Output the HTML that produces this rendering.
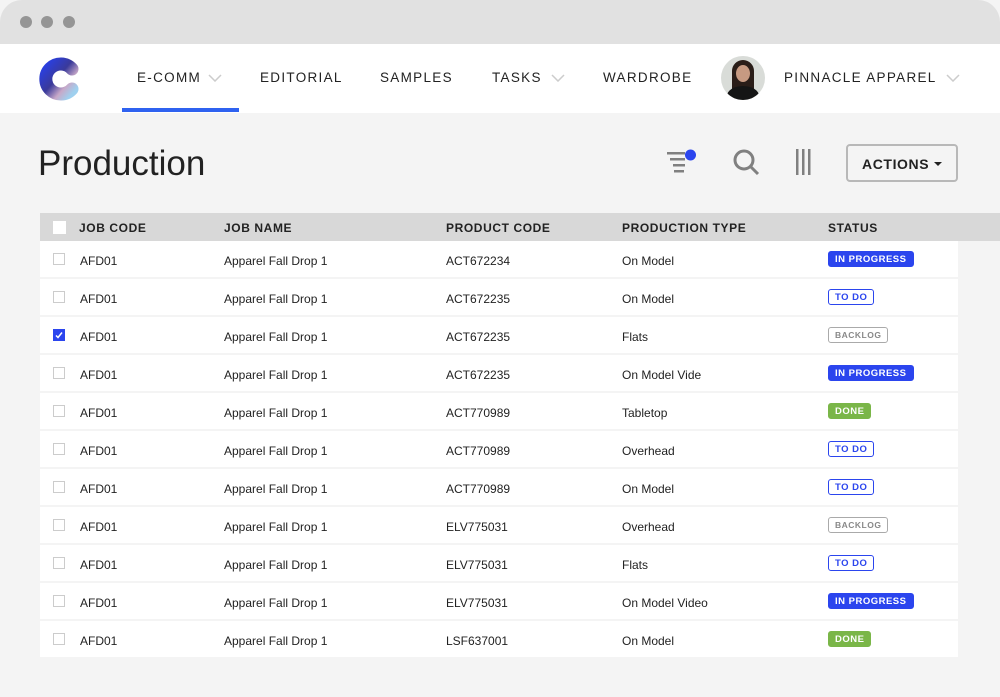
<!DOCTYPE html>
<html><head><style>
*{margin:0;padding:0;box-sizing:border-box}
body{width:1000px;height:697px;background:#f4f4f4;font-family:"Liberation Sans",sans-serif;position:relative;overflow:hidden;color:#222}
.top{position:absolute;left:0;top:0;width:1000px;height:44px;background:#e1e1e1;border-radius:22px 22px 0 0}
.dot{position:absolute;top:16px;width:12px;height:12px;border-radius:50%;background:#959595}
.nav{position:absolute;left:0;top:44px;width:1000px;height:69px;background:#fff}
.ni{position:absolute;top:26px;font-size:13.5px;letter-spacing:1.3px;color:#222}
.chev{position:absolute;top:30px}
h1{position:absolute;left:38px;top:144px;font-size:35px;font-weight:normal;color:#222}
.hdr{position:absolute;left:40px;top:213px;width:960px;height:28px;background:#d8d8d8}
.hdr span{position:absolute;top:8px;font-size:12px;font-weight:bold;letter-spacing:0.6px;color:#222}
.row{position:absolute;left:40px;width:918px;height:36px;background:#fff}
.row span{position:absolute;top:13px;font-size:12px;color:#222}
.cb{position:absolute;left:13px;top:12px;width:12px;height:12px;border:1px solid #ccc;background:#fff}
.b{position:absolute;left:788px;top:10px;height:16px;padding:0 6px;font-size:9.5px;font-weight:bold;letter-spacing:0.5px;display:flex;align-items:center;border-radius:3px;border:1px solid}
.ip{background:#2b45ee;border-color:#2b45ee;color:#fff}
.td{color:#2b45ee;border-color:#2b45ee;background:#fff}
.bl{color:#888;border-color:#aaa;background:#fff;font-size:8.5px}
.dn{background:#7ab648;border-color:#7ab648;color:#fff}
</style></head><body>
<div class="top"><div class="dot" style="left:20px"></div><div class="dot" style="left:41px"></div><div class="dot" style="left:63px"></div></div>
<div class="nav">
<svg style="position:absolute;left:39px;top:12px" width="44" height="46" viewBox="0 0 44 46"><defs><linearGradient id="g" x1="0" y1="0" x2="1" y2="1"><stop offset="0" stop-color="#2a3fe0"/><stop offset="0.45" stop-color="#3a3a9a"/><stop offset="0.75" stop-color="#c7a8c8"/><stop offset="1" stop-color="#9fd0ef"/></linearGradient></defs><path d="M33 13 A15 15 0 1 0 33 33" fill="none" stroke="url(#g)" stroke-width="13" stroke-linecap="round"/></svg>
<div class="ni" style="left:137px">E-COMM</div>
<svg class="chev" style="left:208px" width="14" height="8"><path d="M1 1l6 6 6-6" fill="none" stroke="#ccc" stroke-width="1.5"/></svg>
<div style="position:absolute;left:122px;top:64px;width:117px;height:4px;background:#2f62f0"></div>
<div class="ni" style="left:260px">EDITORIAL</div>
<div class="ni" style="left:380px">SAMPLES</div>
<div class="ni" style="left:492px">TASKS</div>
<svg class="chev" style="left:551px" width="14" height="8"><path d="M1 1l6 6 6-6" fill="none" stroke="#ccc" stroke-width="1.5"/></svg>
<div class="ni" style="left:603px">WARDROBE</div>
<div style="position:absolute;left:721px;top:12px;width:44px;height:44px;border-radius:50%;background:#d9dcd8;overflow:hidden"><div style="position:absolute;left:11px;top:4px;width:22px;height:34px;border-radius:11px 11px 4px 4px;background:#2a1d18"></div><div style="position:absolute;left:15px;top:9px;width:14px;height:17px;border-radius:50%;background:#c79a82"></div><div style="position:absolute;left:6px;top:30px;width:32px;height:20px;border-radius:50% 50% 0 0;background:#151515"></div></div>
<div class="ni" style="left:784px">PINNACLE APPAREL</div>
<svg class="chev" style="left:946px" width="14" height="8"><path d="M1 1l6 6 6-6" fill="none" stroke="#ccc" stroke-width="1.5"/></svg>
</div>
<h1>Production</h1>
<svg style="position:absolute;left:666px;top:148px" width="32" height="28"><g fill="#808080"><rect x="1" y="4" width="18" height="2.5"/><rect x="4" y="10" width="15" height="2.5"/><rect x="7" y="16" width="12" height="2.5"/><rect x="8" y="22" width="10" height="2.5"/></g><circle cx="24.5" cy="7" r="5.5" fill="#2b45ee"/></svg>
<svg style="position:absolute;left:732px;top:148px" width="30" height="30"><circle cx="12" cy="12" r="9" fill="none" stroke="#808080" stroke-width="3"/><path d="M18.5 18.5l7.5 7.5" stroke="#808080" stroke-width="3"/></svg>
<svg style="position:absolute;left:794px;top:148px" width="20" height="28"><g fill="#808080"><rect x="2" y="1" width="2.5" height="26"/><rect x="8" y="1" width="2.5" height="26"/><rect x="14" y="1" width="2.5" height="26"/></g></svg>
<div style="position:absolute;left:846px;top:144px;width:112px;height:38px;border:2px solid #b8b8b8;border-radius:4px;font-size:14px;font-weight:bold;letter-spacing:0.6px;padding:10px 0 0 14px;color:#222">ACTIONS<span style="position:absolute;left:86px;top:16px;border:4px solid transparent;border-top:4px solid #222"></span></div>
<div class="hdr"><div style="position:absolute;left:13px;top:8px;width:13px;height:13px;background:#fff"></div><span style="left:39px">JOB CODE</span><span style="left:184px">JOB NAME</span><span style="left:406px">PRODUCT CODE</span><span style="left:582px">PRODUCTION TYPE</span><span style="left:788px">STATUS</span></div>
<div class="row" style="top:241px"><div class="cb"></div><span style="left:40px">AFD01</span><span style="left:184px">Apparel Fall Drop 1</span><span style="left:406px">ACT672234</span><span style="left:582px">On Model</span><div class="b ip">IN PROGRESS</div></div>
<div class="row" style="top:279px"><div class="cb"></div><span style="left:40px">AFD01</span><span style="left:184px">Apparel Fall Drop 1</span><span style="left:406px">ACT672235</span><span style="left:582px">On Model</span><div class="b td">TO DO</div></div>
<div class="row" style="top:317px"><div class="cb" style="background:#2b45ee;border-color:#2b45ee"><svg width="10" height="10" style="position:absolute;left:0;top:0"><path d="M2 5.5l2 2 4-5" fill="none" stroke="#fff" stroke-width="1.5"/></svg></div><span style="left:40px">AFD01</span><span style="left:184px">Apparel Fall Drop 1</span><span style="left:406px">ACT672235</span><span style="left:582px">Flats</span><div class="b bl">BACKLOG</div></div>
<div class="row" style="top:355px"><div class="cb"></div><span style="left:40px">AFD01</span><span style="left:184px">Apparel Fall Drop 1</span><span style="left:406px">ACT672235</span><span style="left:582px">On Model Vide</span><div class="b ip">IN PROGRESS</div></div>
<div class="row" style="top:393px"><div class="cb"></div><span style="left:40px">AFD01</span><span style="left:184px">Apparel Fall Drop 1</span><span style="left:406px">ACT770989</span><span style="left:582px">Tabletop</span><div class="b dn">DONE</div></div>
<div class="row" style="top:431px"><div class="cb"></div><span style="left:40px">AFD01</span><span style="left:184px">Apparel Fall Drop 1</span><span style="left:406px">ACT770989</span><span style="left:582px">Overhead</span><div class="b td">TO DO</div></div>
<div class="row" style="top:469px"><div class="cb"></div><span style="left:40px">AFD01</span><span style="left:184px">Apparel Fall Drop 1</span><span style="left:406px">ACT770989</span><span style="left:582px">On Model</span><div class="b td">TO DO</div></div>
<div class="row" style="top:507px"><div class="cb"></div><span style="left:40px">AFD01</span><span style="left:184px">Apparel Fall Drop 1</span><span style="left:406px">ELV775031</span><span style="left:582px">Overhead</span><div class="b bl">BACKLOG</div></div>
<div class="row" style="top:545px"><div class="cb"></div><span style="left:40px">AFD01</span><span style="left:184px">Apparel Fall Drop 1</span><span style="left:406px">ELV775031</span><span style="left:582px">Flats</span><div class="b td">TO DO</div></div>
<div class="row" style="top:583px"><div class="cb"></div><span style="left:40px">AFD01</span><span style="left:184px">Apparel Fall Drop 1</span><span style="left:406px">ELV775031</span><span style="left:582px">On Model Video</span><div class="b ip">IN PROGRESS</div></div>
<div class="row" style="top:621px"><div class="cb"></div><span style="left:40px">AFD01</span><span style="left:184px">Apparel Fall Drop 1</span><span style="left:406px">LSF637001</span><span style="left:582px">On Model</span><div class="b dn">DONE</div></div>
</body></html>
